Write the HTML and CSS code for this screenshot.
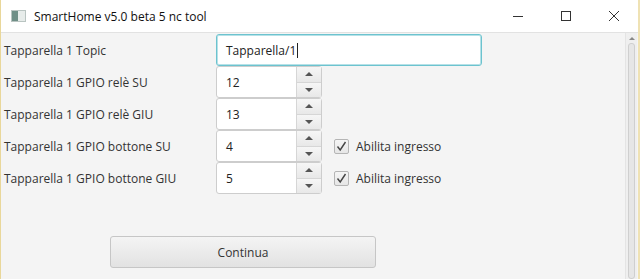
FILE: index.html
```html
<!DOCTYPE html>
<html>
<head>
<meta charset="utf-8">
<link rel="stylesheet" href="styles.css">
</head>
<body>
<div class="window">
  <div class="titlebar">
    <div class="app-icon"><span class="ic-a"></span><span class="ic-b"></span></div>
    <div class="title">SmartHome v5.0 beta 5 nc tool</div>
    <div class="controls">
      <div class="ctl"><svg width="12" height="12" viewBox="0 0 12 12"><path d="M1 6.5h10" stroke="#333" stroke-width="1"/></svg></div>
      <div class="ctl"><svg width="12" height="12" viewBox="0 0 12 12"><rect x="1.5" y="1.5" width="9" height="9" fill="none" stroke="#333" stroke-width="1"/></svg></div>
      <div class="ctl"><svg width="12" height="12" viewBox="0 0 12 12"><path d="M1 1L11 11M11 1L1 11" stroke="#333" stroke-width="1"/></svg></div>
    </div>
  </div>
  <div class="content">
    <div class="form">
      <div class="grid">
        <div class="label">Tapparella 1 Topic</div>
        <div class="field"><div class="textfield">Tapparella/1<span class="caret"></span></div></div>

        <div class="label">Tapparella 1 GPIO relè SU</div>
        <div class="field"><div class="spinner"><div class="sp-val">12</div><div class="sp-btns"><div class="sp-up"><span class="tri-up"></span></div><div class="sp-down"><span class="tri-down"></span></div></div></div></div>

        <div class="label">Tapparella 1 GPIO relè GIU</div>
        <div class="field"><div class="spinner"><div class="sp-val">13</div><div class="sp-btns"><div class="sp-up"><span class="tri-up"></span></div><div class="sp-down"><span class="tri-down"></span></div></div></div></div>

        <div class="label">Tapparella 1 GPIO bottone SU</div>
        <div class="field"><div class="spinner"><div class="sp-val">4</div><div class="sp-btns"><div class="sp-up"><span class="tri-up"></span></div><div class="sp-down"><span class="tri-down"></span></div></div></div>
          <div class="check"><span class="box"><svg width="13" height="13" viewBox="0 0 13 13"><path d="M2.5 6.5L5.2 10L10.5 2" fill="none" stroke="#444" stroke-width="1.4"/></svg></span>Abilita ingresso</div></div>

        <div class="label">Tapparella 1 GPIO bottone GIU</div>
        <div class="field"><div class="spinner"><div class="sp-val">5</div><div class="sp-btns"><div class="sp-up"><span class="tri-up"></span></div><div class="sp-down"><span class="tri-down"></span></div></div></div>
          <div class="check"><span class="box"><svg width="13" height="13" viewBox="0 0 13 13"><path d="M2.5 6.5L5.2 10L10.5 2" fill="none" stroke="#444" stroke-width="1.4"/></svg></span>Abilita ingresso</div></div>
      </div>
      <div class="actions"><div class="button">Continua</div></div>
    </div>
    <div class="scrollbar">
      <div class="sb-arrow"><span class="tri-up small"></span></div>
      <div class="sb-thumb"></div>
    </div>
  </div>
</div>
</body>
</html>
```

FILE: styles.css
```css
html, body { margin: 0; padding: 0; }
body {
  width: 640px; height: 279px; overflow: hidden;
  font-family: "Open Sans", "Noto Sans", "Liberation Sans", sans-serif;
  font-size: 12px; color: #333;
}
.window {
  height: 279px; box-sizing: border-box;
  border-left: 1px solid #e9d79a; border-right: 2px solid #efe2b4;
  display: flex; flex-direction: column; background: #f4f4f4;
}
.titlebar {
  height: 32px; flex: none; background: #fff;
  display: flex; align-items: center;
  border-bottom: 1px solid #e2e2e2;
}
.app-icon {
  width: 13px; height: 10px; margin-left: 10px; margin-right: 8px;
  display: flex; background: #d8dfdd; border: 1px solid #b9c4c1;
}
.ic-a { width: 6px; background: #6f8f87; }
.ic-b { flex: 1; background: #e7ecea; }
.title { font-size: 12px; color: #111; flex: 1; }
.controls { display: flex; }
.ctl { width: 48px; height: 32px; display: flex; align-items: center; justify-content: center; }
.content { flex: 1; display: flex; min-height: 0; }
.form { flex: 1; padding: 1px 0 0 3px; }
.grid {
  display: grid; grid-template-columns: 212px auto;
  grid-auto-rows: 32px;
}
.label { display: flex; align-items: center; color: #333; white-space: nowrap; }
.field { display: flex; align-items: center; }
.textfield {
  width: 266px; height: 32px; box-sizing: border-box;
  border: 1px solid #6cc3cf; border-radius: 3px;
  box-shadow: inset 0 0 0 1px #b6e1e7;
  background: #fff; display: flex; align-items: center;
  padding-left: 9px; color: #222;
}
.caret { width: 1px; height: 15px; background: #222; margin-left: 1px; }
.spinner {
  width: 106px; height: 32px; box-sizing: border-box;
  display: flex; border: 1px solid #cdcdcd; border-radius: 3px; background: #fff;
}
.sp-val { flex: 1; display: flex; align-items: center; padding-left: 9px; color: #222; }
.sp-btns {
  width: 24px; display: flex; flex-direction: column;
  border-left: 1px solid #d6d6d6;
}
.sp-up, .sp-down {
  flex: 1; display: flex; align-items: center; justify-content: center;
  background: linear-gradient(#f6f6f6, #e8e8e8);
}
.sp-up { border-bottom: 1px solid #d6d6d6; }
.tri-up { width: 0; height: 0; border-left: 4px solid transparent; border-right: 4px solid transparent; border-bottom: 4px solid #555; }
.tri-down { width: 0; height: 0; border-left: 4px solid transparent; border-right: 4px solid transparent; border-top: 4px solid #555; }
.check { display: flex; align-items: center; margin-left: 12px; color: #333; }
.box {
  width: 13px; height: 13px; border: 1px solid #b5b5b5; border-radius: 2px;
  background: linear-gradient(#f5f5f5, #e6e6e6); margin-right: 7px;
  display: flex;
}
.actions { padding: 42px 0 0 106px; }
.button {
  width: 266px; height: 32px; box-sizing: border-box;
  border: 1px solid #c6c6c6; border-radius: 3px;
  background: linear-gradient(#f4f4f4, #e2e2e2);
  display: flex; align-items: center; justify-content: center; color: #333;
}
.scrollbar {
  width: 11px; margin-right: 1px; display: flex; flex-direction: column;
  align-items: center; border-left: 1px solid #e4e4e4; background: #efefef;
}
.sb-arrow { height: 10px; display: flex; align-items: center; justify-content: center; }
.tri-up.small { border-left-width: 3px; border-right-width: 3px; border-bottom-width: 3px; border-bottom-color: #888; }
.sb-thumb {
  flex: 1; width: 7px; box-sizing: border-box; border: 1px solid #cfcfcf; border-radius: 3px;
  background: #e6e6e6;
}
```
